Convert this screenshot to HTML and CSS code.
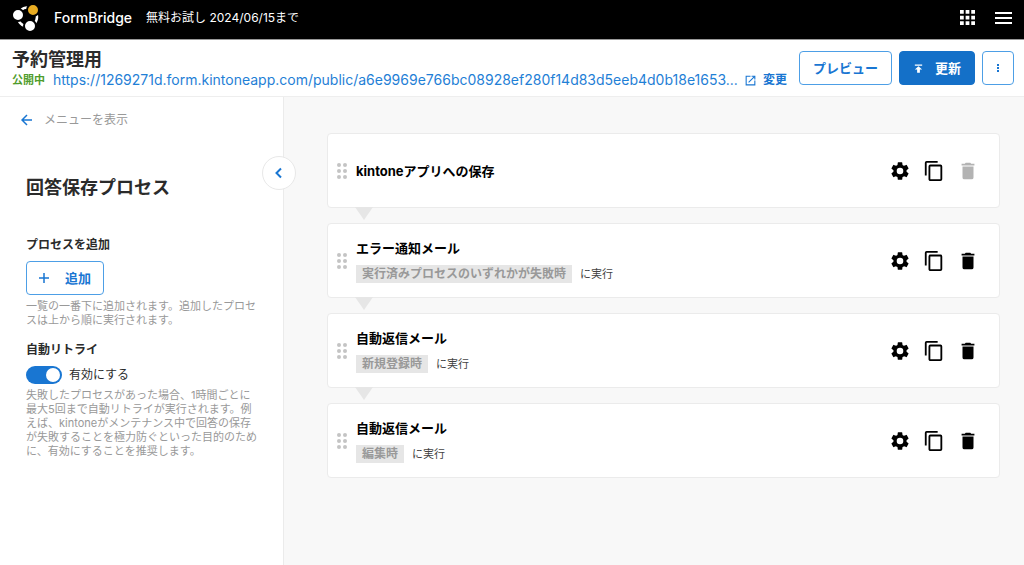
FILE: index.html
```html
<!DOCTYPE html>
<html lang="ja">
<head>
<meta charset="utf-8">
<meta name="viewport" content="width=device-width, initial-scale=1">
<title>予約管理用 - FormBridge</title>
<link rel="stylesheet" href="styles.css">
</head>
<body>
<svg class="defs" aria-hidden="true">
  <symbol id="gear" viewBox="0 0 24 24"><path d="M19.14 12.94c.04-.3.06-.61.06-.94s-.02-.64-.07-.94l2.03-1.58a.49.49 0 0 0 .12-.61l-1.92-3.32a.49.49 0 0 0-.59-.22l-2.39.96a7 7 0 0 0-1.62-.94l-.36-2.54a.48.48 0 0 0-.48-.41h-3.84a.47.47 0 0 0-.47.41l-.36 2.54c-.59.24-1.13.57-1.62.94l-2.39-.96a.47.47 0 0 0-.59.22L2.74 8.87a.47.47 0 0 0 .12.61l2.03 1.58c-.05.3-.09.63-.09.94s.02.64.07.94l-2.03 1.58a.49.49 0 0 0-.12.61l1.92 3.32c.12.22.37.29.59.22l2.39-.96c.5.38 1.03.7 1.62.94l.36 2.54c.05.24.24.41.48.41h3.84c.24 0 .44-.17.47-.41l.36-2.54a7 7 0 0 0 1.62-.94l2.39.96c.22.08.47 0 .59-.22l1.92-3.32a.47.47 0 0 0-.12-.61zM12 15.6a3.6 3.6 0 1 1 0-7.2 3.6 3.6 0 0 1 0 7.2z"/></symbol>
  <symbol id="copy" viewBox="0 0 24 24"><path d="M16 1H4a2 2 0 0 0-2 2v14h2V3h12zm3 4H8a2 2 0 0 0-2 2v14c0 1.100.9 2 2 2h11a2 2 0 0 0 2-2V7a2 2 0 0 0-2-2zm0 16H8V7h11z"/></symbol>
  <symbol id="trash" viewBox="0 0 24 24"><path d="M6 19a2 2 0 0 0 2 2h8a2 2 0 0 0 2-2V7H6zM19 4h-3.500l-1-1h-5l-1 1H5v2h14z"/></symbol>
  <symbol id="grip" viewBox="0 0 12 18"><circle cx="3" cy="3" r="2"/><circle cx="9" cy="3" r="2"/><circle cx="3" cy="9" r="2"/><circle cx="9" cy="9" r="2"/><circle cx="3" cy="15" r="2"/><circle cx="9" cy="15" r="2"/></symbol>
</svg>

<header class="topbar">
  <svg class="logo" viewBox="0 0 28 28" aria-hidden="true">
    <circle cx="15.500" cy="13" r="9.500" fill="none" stroke="#fff" stroke-width="2.500"/>
    <g stroke="#000" stroke-width="2"><circle cx="6" cy="11" r="6" fill="#fff"/><circle cx="21" cy="6" r="6" fill="#e8ac22"/><circle cx="18" cy="22" r="6" fill="#fff"/></g>
  </svg>
  <span class="brand">FormBridge</span>
  <span class="trial">無料お試し 2024/06/15まで</span>
  <div class="topbar-actions">
    <button class="plain" type="button" aria-label="アプリ一覧"><svg class="icon-apps" viewBox="0 0 16 16"><path d="M0 0h4v4H0zM6 0h4v4H6zM12 0h4v4h-4zM0 6h4v4H0zM6 6h4v4H6zM12 6h4v4h-4zM0 12h4v4H0zM6 12h4v4H6zM12 12h4v4h-4z"/></svg></button>
    <button class="plain" type="button" aria-label="メニュー"><svg class="icon-menu" viewBox="0 0 17 12"><path d="M0 0h17v2H0zM0 5h17v2H0zM0 10h17v2H0z"/></svg></button>
  </div>
</header>

<div class="formbar">
  <div class="form-info">
    <h1 class="form-title">予約管理用</h1>
    <div class="form-meta">
      <span class="status">公開中</span>
      <a class="url" href="#">https://1269271d.form.kintoneapp.com/public/a6e9969e766bc08928ef280f14d83d5eeb4d0b18e1653...</a>
      <svg class="icon-open" viewBox="0 0 24 24" aria-hidden="true"><path d="M19 19H5V5h7V3H3v18h18v-9h-2zM14 3v2h3.600l-9.800 9.800 1.400 1.400L19 6.400V10h2V3z"/></svg>
      <a class="change" href="#">変更</a>
    </div>
  </div>
  <div class="form-actions">
    <button class="btn" type="button">プレビュー</button>
    <button class="btn btn-primary" type="button"><svg class="icon-publish" viewBox="0 0 24 24" aria-hidden="true"><path d="M4 3v3h16V3zm0 11h5v7h6v-7h5l-8-7z"/></svg>更新</button>
    <button class="btn btn-more" type="button" aria-label="その他"><svg class="icon-more" viewBox="0 0 2 8"><path d="M0 0h2v2H0zM0 3h2v2H0zM0 6h2v2H0z"/></svg></button>
  </div>
</div>

<div class="layout">
  <aside class="sidebar">
    <a class="back" href="#"><svg class="icon-back" viewBox="0 0 12 12" aria-hidden="true"><path d="M11 6H1M6 1 1 6l5 5"/></svg>メニューを表示</a>
    <button class="collapse" type="button" aria-label="サイドバーを閉じる"><svg class="icon-chevron" viewBox="0 0 8 12"><path d="M6 1.500 1.500 6 6 10.500"/></svg></button>
    <div class="panel">
      <h2 class="panel-title">回答保存プロセス</h2>
      <section class="group">
        <h3 class="group-title">プロセスを追加</h3>
        <button class="btn btn-add" type="button"><svg class="icon-plus" viewBox="0 0 10 10" aria-hidden="true"><path d="M5 0v10M0 5h10"/></svg>追加</button>
        <p class="hint">一覧の一番下に追加されます。追加したプロセ<br>スは上から順に実行されます。</p>
      </section>
      <section class="group">
        <h3 class="group-title">自動リトライ</h3>
        <div class="switch-row"><input class="switch" type="checkbox" id="retry" checked><label for="retry">有効にする</label></div>
        <p class="hint">失敗したプロセスがあった場合、1時間ごとに<br>最大5回まで自動リトライが実行されます。例<br>えば、kintoneがメンテナンス中で回答の保存<br>が失敗することを極力防ぐといった目的のため<br>に、有効にすることを推奨します。</p>
      </section>
    </div>
  </aside>

  <main class="main">
    <ol class="steps">
      <li class="step">
        <svg class="grip" aria-hidden="true"><use href="#grip"/></svg>
        <div class="step-body"><h4 class="step-title">kintoneアプリへの保存</h4></div>
        <div class="step-actions">
          <button class="plain" type="button" aria-label="設定"><svg class="icon-action"><use href="#gear"/></svg></button>
          <button class="plain" type="button" aria-label="複製"><svg class="icon-action"><use href="#copy"/></svg></button>
          <button class="plain" type="button" aria-label="削除" disabled><svg class="icon-action"><use href="#trash"/></svg></button>
        </div>
      </li>
      <li class="step">
        <svg class="grip" aria-hidden="true"><use href="#grip"/></svg>
        <div class="step-body"><h4 class="step-title">エラー通知メール</h4><p class="when"><span class="tag">実行済みプロセスのいずれかが失敗時</span>に実行</p></div>
        <div class="step-actions">
          <button class="plain" type="button" aria-label="設定"><svg class="icon-action"><use href="#gear"/></svg></button>
          <button class="plain" type="button" aria-label="複製"><svg class="icon-action"><use href="#copy"/></svg></button>
          <button class="plain" type="button" aria-label="削除"><svg class="icon-action"><use href="#trash"/></svg></button>
        </div>
      </li>
      <li class="step">
        <svg class="grip" aria-hidden="true"><use href="#grip"/></svg>
        <div class="step-body"><h4 class="step-title">自動返信メール</h4><p class="when"><span class="tag">新規登録時</span>に実行</p></div>
        <div class="step-actions">
          <button class="plain" type="button" aria-label="設定"><svg class="icon-action"><use href="#gear"/></svg></button>
          <button class="plain" type="button" aria-label="複製"><svg class="icon-action"><use href="#copy"/></svg></button>
          <button class="plain" type="button" aria-label="削除"><svg class="icon-action"><use href="#trash"/></svg></button>
        </div>
      </li>
      <li class="step">
        <svg class="grip" aria-hidden="true"><use href="#grip"/></svg>
        <div class="step-body"><h4 class="step-title">自動返信メール</h4><p class="when"><span class="tag">編集時</span>に実行</p></div>
        <div class="step-actions">
          <button class="plain" type="button" aria-label="設定"><svg class="icon-action"><use href="#gear"/></svg></button>
          <button class="plain" type="button" aria-label="複製"><svg class="icon-action"><use href="#copy"/></svg></button>
          <button class="plain" type="button" aria-label="削除"><svg class="icon-action"><use href="#trash"/></svg></button>
        </div>
      </li>
    </ol>
  </main>
</div>
</body>
</html>
```
FILE: styles.css
```css
* { box-sizing: border-box; }

body {
  margin: 0;
  min-height: 100vh;
  display: flex;
  flex-direction: column;
  background: #f8f8f8;
  color: #2b2b2b;
  font: 12px/16px Inter, "Noto Sans CJK JP", sans-serif;
}

h1, h2, h3, h4, p, ol { margin: 0; padding: 0; }
a { text-decoration: none; }
button { font: inherit; cursor: pointer; }
svg { display: block; flex: none; }
.defs { position: absolute; width: 0; height: 0; }

.plain {
  display: flex;
  padding: 0;
  border: 0;
  background: none;
  color: inherit;
}
.plain svg { fill: currentColor; }
.plain:disabled { color: #b3b3b3; cursor: default; }

/* Top bar */
.topbar {
  display: flex;
  align-items: center;
  height: 40px;
  padding: 0 12px 4px;
  border-bottom: 1px solid #999;
  background: #000;
  color: #fff;
}
.logo { width: 28px; height: 28px; }
.brand { margin-left: 14px; font-size: 14px; font-weight: 500; }
.trial { margin-left: 14px; }
.topbar-actions { display: flex; align-items: center; gap: 20px; margin-left: auto; }
.icon-apps { width: 15px; height: 15px; }
.icon-menu { width: 17px; height: 12px; }

/* Form bar */
.formbar {
  display: flex;
  align-items: center;
  justify-content: space-between;
  gap: 8px;
  padding: 8px 10px;
  border-bottom: 1px solid #eee;
  background: #fff;
}
.form-info { min-width: 0; padding-left: 2px; }
.form-title { font-size: 18px; line-height: 24px; font-weight: 700; }
.form-meta { display: flex; align-items: center; white-space: nowrap; }
.status { color: #4f9c2c; font-size: 11px; font-weight: 700; }
.url { margin-left: 8px; color: #1f80d6; font-size: 14px; overflow: hidden; text-overflow: ellipsis; }
.icon-open { width: 13px; height: 13px; margin: 0 6px; fill: #1976d2; }
.change { color: #1976d2; font-weight: 700; }
.form-actions { display: flex; gap: 7px; }

.btn {
  display: flex;
  align-items: center;
  justify-content: center;
  height: 34px;
  padding: 0 13px;
  border: 1px solid #4d9fe6;
  border-radius: 4px;
  background: #fff;
  color: #1976d2;
  font-size: 13px;
  font-weight: 700;
  white-space: nowrap;
}
.btn-primary { gap: 11px; border-color: #1470c8; background: #1470c8; color: #fff; }
.icon-publish { width: 11px; height: 11px; fill: currentColor; }
.btn-more { width: 32px; padding: 0; }
.icon-more { width: 2px; height: 8px; fill: currentColor; }

/* Sidebar */
.layout { display: flex; flex: 1; }
.sidebar {
  position: relative;
  flex: none;
  width: 284px;
  border-right: 1px solid #ebebeb;
  background: #fff;
}
.back {
  display: flex;
  align-items: center;
  gap: 11px;
  padding: 15px 21px 0;
  color: #999;
}
.icon-back { width: 12px; height: 12px; fill: none; stroke: #1976d2; stroke-width: 1.500; }
.collapse {
  position: absolute;
  top: 59px;
  right: -13px;
  display: flex;
  align-items: center;
  justify-content: center;
  width: 34px;
  height: 34px;
  padding: 0;
  border: 1px solid #e8e8e8;
  border-radius: 50%;
  background: #fff;
}
.icon-chevron { width: 8px; height: 12px; fill: none; stroke: #1976d2; stroke-width: 2; }
.panel { padding: 47px 0 24px 26px; }
.panel-title { font-size: 18px; line-height: 26px; font-weight: 700; }
.group { margin-top: 15px; }
.panel-title + .group { margin-top: 36px; }
.group-title { margin-bottom: 8px; font-size: 12px; font-weight: 700; }
.btn-add { width: 78px; gap: 16px; }
.icon-plus { width: 10px; height: 10px; fill: none; stroke: currentColor; stroke-width: 1.500; }
.hint { margin-top: 4px; color: #999; font-size: 11px; line-height: 14px; white-space: nowrap; }
.switch-row { display: flex; align-items: center; gap: 7px; }
.switch {
  appearance: none;
  width: 36px;
  height: 18px;
  margin: 0;
  padding: 2px;
  border-radius: 9px;
  background: #999;
}
.switch::before { content: ""; display: block; width: 14px; height: 14px; border-radius: 50%; background: #fff; }
.switch:checked { background: #1976d2; }
.switch:checked::before { margin-left: auto; }

/* Process list */
.main { flex: 1; min-width: 0; padding: 36px 24px 36px 43px; }
.steps { display: grid; gap: 15px; list-style: none; }
.step {
  position: relative;
  display: flex;
  align-items: center;
  min-height: 75px;
  padding: 0 20px 0 8px;
  border: 1px solid #ebebeb;
  border-radius: 4px;
  background: #fff;
  color: #000;
}
.step:not(:last-child)::after {
  content: "";
  position: absolute;
  top: 100%;
  left: 27px;
  border: 9px solid transparent;
  border-top: 13px solid #e6e6e6;
  border-bottom: 0;
}
.grip { width: 12px; height: 18px; fill: #c4c4c4; }
.step-body { flex: 1; margin-left: 8px; }
.step-title { font-size: 13px; line-height: 18px; font-weight: 700; }
.when { display: flex; align-items: center; gap: 8px; margin-top: 8px; color: #444; font-size: 11px; line-height: 18px; }
.tag { padding: 0 6px; background: #e6e6e6; color: #999; font-size: 12px; font-weight: 700; }
.step-actions { display: flex; align-items: center; gap: 12px; }
.icon-action { width: 22px; height: 22px; }
```
